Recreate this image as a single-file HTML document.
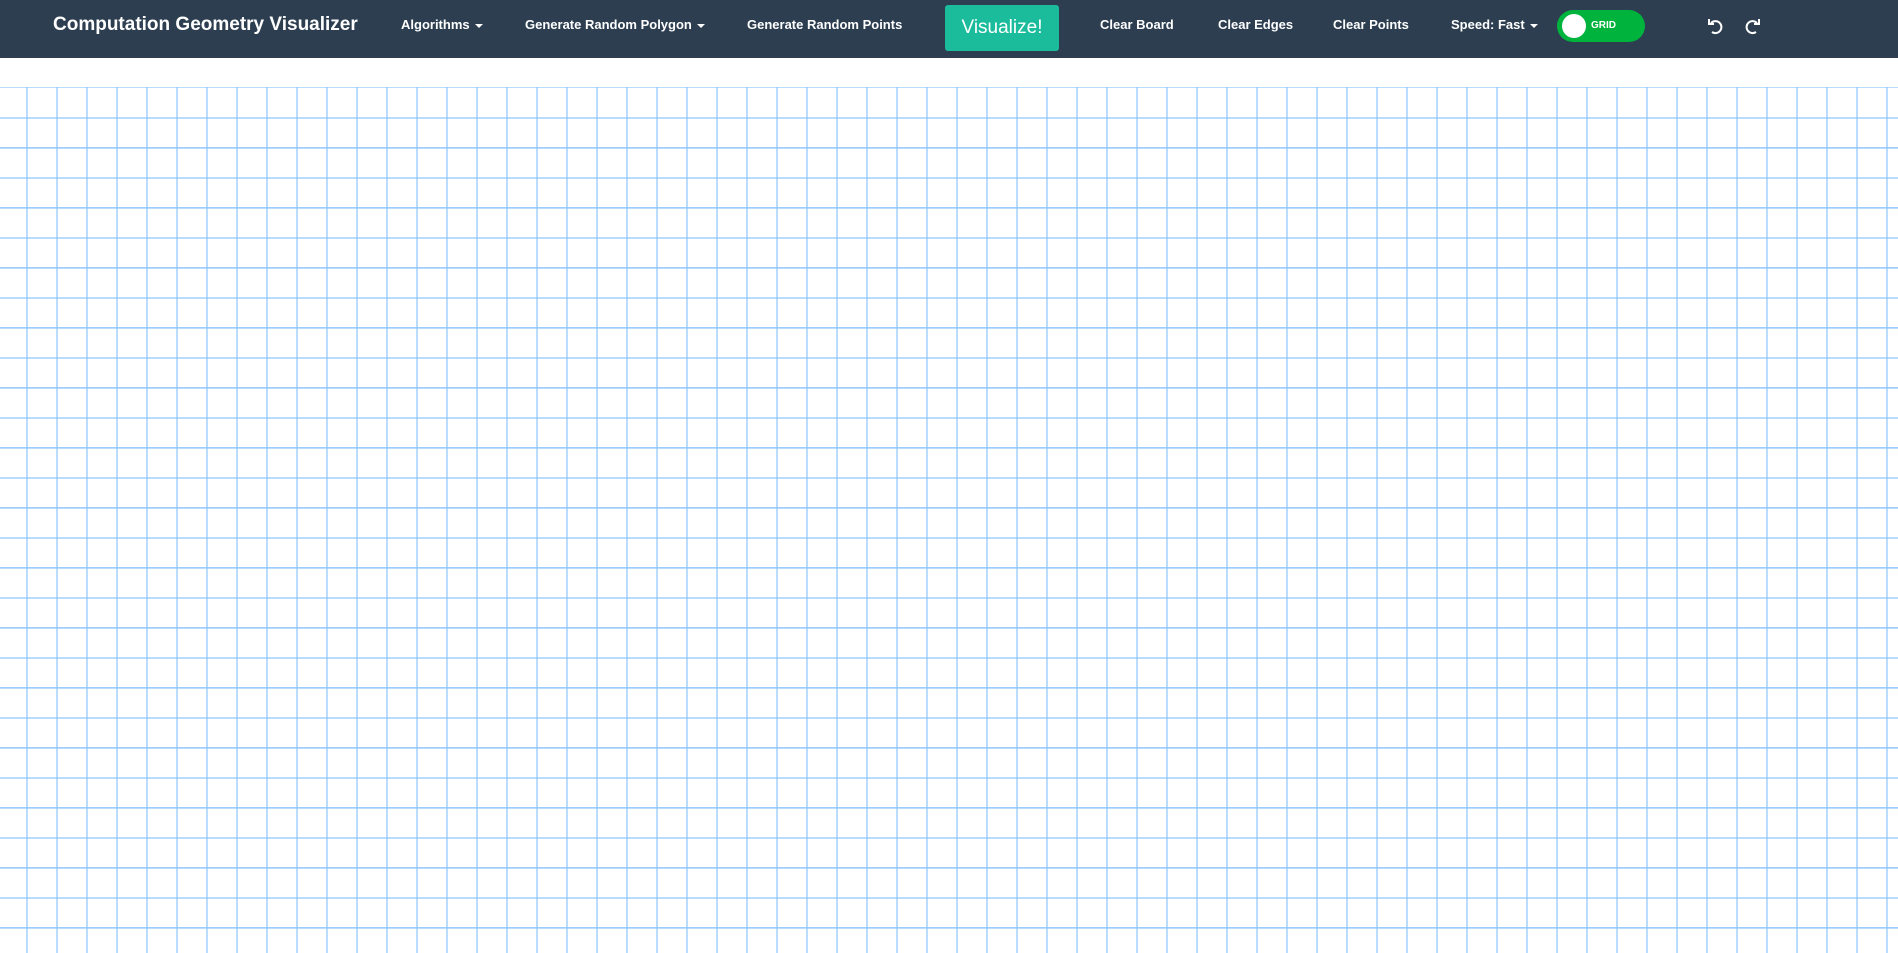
<!DOCTYPE html>
<html><head><meta charset="utf-8"><style>
*{margin:0;padding:0;box-sizing:border-box}
body{width:1898px;height:953px;overflow:hidden;background:#fff;font-family:"Liberation Sans",sans-serif;position:relative}
nav{position:absolute;left:0;top:0;width:1898px;height:58px;background:#2c3e50;color:#fff}
nav span{position:absolute;white-space:nowrap;font-weight:bold;font-size:13px;top:17px}
.title{font-size:19px!important;top:14px!important;left:53px}
.car{display:inline-block;width:0;height:0;border-left:4px solid transparent;border-right:4px solid transparent;border-top:4px solid #fff;vertical-align:middle;margin-left:5px}
.btn{position:absolute;left:945px;top:5px;width:114px;height:46px;background:#1abc9c;border-radius:3px;color:#fff;font-size:19px;text-align:center;line-height:46px}
.tog{position:absolute;left:1557px;top:10px;width:88px;height:32px;border-radius:16px;background:#00b33c}
.knob{position:absolute;left:5px;top:4px;width:24px;height:24px;border-radius:50%;background:#fff}
.tog b{position:absolute;left:34px;top:10px;font-size:10px;color:#fff}
.grid{position:absolute;left:0;top:87px;width:1898px;height:866px;
background-image:
linear-gradient(to right, transparent 26px, rgba(140,196,255,.6) 26px, rgba(140,196,255,.6) 28px, transparent 28px),
linear-gradient(to bottom, rgba(140,196,255,.6) 0, rgba(140,196,255,.6) 1px, transparent 1px, transparent 30px, rgba(140,196,255,.6) 30px, rgba(140,196,255,.6) 32px, transparent 32px);
background-size:30px 100%, 100% 60px;}
.grid2{position:absolute;left:0;top:147px;width:1898px;height:806px;
background-image:linear-gradient(to bottom, rgba(140,196,255,.6) 0, rgba(140,196,255,.6) 2px, transparent 2px);
background-size:100% 60px;}
</style></head><body>
<div class="grid"></div><div class="grid2"></div>
<nav>
<span class="title">Computation Geometry Visualizer</span>
<span style="left:401px">Algorithms<i class="car"></i></span>
<span style="left:525px">Generate Random Polygon<i class="car"></i></span>
<span style="left:747px">Generate Random Points</span>
<div class="btn">Visualize!</div>
<span style="left:1100px">Clear Board</span>
<span style="left:1218px">Clear Edges</span>
<span style="left:1333px">Clear Points</span>
<span style="left:1451px">Speed: Fast<i class="car"></i></span>
<div class="tog"><div class="knob"></div><b>GRID</b></div>
<svg style="position:absolute;left:1706px;top:17px" width="18" height="18" viewBox="0 0 18 18" fill="none" stroke="#fff" stroke-width="2"><path d="M5 6 A6 6 0 1 1 6 15"/><path d="M3 2 V7 H8" /></svg>
<svg style="position:absolute;left:1744px;top:17px" width="18" height="18" viewBox="0 0 18 18" fill="none" stroke="#fff" stroke-width="2"><path d="M13 6 A6 6 0 1 0 12 15"/><path d="M15 2 V7 H10" /></svg>
</nav>
</body></html>
